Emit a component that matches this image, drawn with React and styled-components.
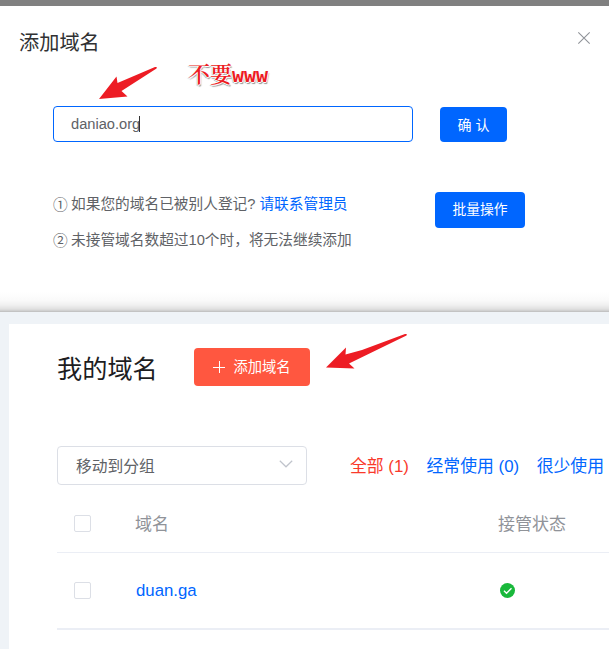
import React from "react";
import styled, { createGlobalStyle } from "styled-components";

const Global = createGlobalStyle`
  *, *::before, *::after { box-sizing: border-box; }
  html, body { margin: 0; padding: 0; overflow: hidden; }
  body { background: #fff; font-family: "Liberation Sans", "Noto Sans CJK SC", sans-serif; font-weight: 400; }
`;

const Screen = styled.main`
  position: relative;
  width: 609px;
  height: 649px;
  overflow: hidden;
  background: #fff;
`;

const Dialog = styled.section`
  height: 312px;
  border-top: 6px solid #808080;
  border-bottom: 1px solid #c3c3c3;
  background: linear-gradient(#fff 0, #fff 286px, #fafafa 294px, #f0f0f0 299px, #e0e0e0 303px, #cccccc 305px);
`;

const DialogHeader = styled.header`
  display: flex;
  justify-content: space-between;
  align-items: center;
  height: 71px;
  padding: 0 18px 0 19px;
`;

const DialogTitle = styled.h2`
  margin: 2px 0 0;
  font-size: 20.2px;
  line-height: 28px;
  font-weight: 400;
  color: #303133;
`;

const CloseButton = styled.button`
  display: flex;
  width: 14px;
  height: 14px;
  margin-top: -7px;
  padding: 0;
  border: 0;
  background: none;
  color: #909399;
`;

const FormRow = styled.div`
  display: flex;
  align-items: flex-start;
  gap: 27px;
  margin-top: 29px;
  padding-left: 53px;
`;

const DomainField = styled.div`
  display: flex;
  align-items: center;
  width: 360px;
  height: 36px;
  padding-left: 17px;
  border: 1px solid #0066ff;
  border-radius: 4px;
  font-size: 14.67px;
  color: #606266;
`;

const Caret = styled.span`
  width: 1px;
  height: 16px;
  margin-left: -1px;
  background: #333;
`;

const Button = styled.button`
  display: flex;
  align-items: center;
  justify-content: center;
  gap: 8px;
  width: ${(p) => p.$width}px;
  height: ${(p) => p.$height || 36}px;
  margin-top: ${(p) => p.$top || 0}px;
  padding: 0;
  border: 0;
  border-radius: 4px;
  background: ${(p) => (p.$danger ? "#ff5740" : "#0066ff")};
  color: #fff;
  font-family: inherit;
  font-size: ${(p) => p.$size || 13.8}px;
  font-weight: 400;
  line-height: 20px;
  white-space: pre;
`;

const HelpRow = styled.div`
  display: flex;
  align-items: flex-start;
  margin-top: 44px;
  padding-left: 53px;
`;

const Notes = styled.div`
  width: 382px;
  color: #606266;
  font-size: 14.7px;
  line-height: 36px;
`;

const Note = styled.p`
  display: flex;
  align-items: center;
  margin: 0;
  height: 36px;
  white-space: pre;
`;

const Marker = styled.span`
  width: 18px;
  font-family: "Noto Sans CJK SC", sans-serif;
`;

const NoteLink = styled.a`
  margin-left: 4px;
  color: #0066ff;
`;

const Page = styled.section`
  height: 337px;
  padding: 12px 0 0 9px;
  background: #eff3f7;
`;

const Panel = styled.div`
  height: 325px;
  padding: 24px 0 0 48px;
  background: #fff;
`;

const PanelHeader = styled.header`
  display: flex;
  align-items: center;
  height: 38px;
`;

const PanelTitle = styled.h1`
  width: 137px;
  margin: 3px 0 0;
  font-size: 25.2px;
  line-height: 36px;
  font-weight: 400;
  color: #1d1d1f;
`;

const Toolbar = styled.div`
  display: flex;
  align-items: center;
  height: 39px;
  margin-top: 60px;
`;

const GroupSelect = styled.div`
  display: flex;
  align-items: center;
  justify-content: space-between;
  width: 250px;
  height: 39px;
  padding: 0 13px 0 18px;
  border: 1px solid #dcdfe6;
  border-radius: 4px;
  color: #606266;
  font-size: 15.75px;
`;

const SelectArrow = styled.svg`
  margin-top: -4px;
`;

const Filters = styled.nav`
  display: flex;
  gap: 17.5px;
  margin: -2px 0 0 43px;
  white-space: nowrap;
  font-size: 16.85px;
`;

const Filter = styled.a`
  flex: none;
  color: ${(p) => (p.$active ? "#f93a2b" : "#0066ff")};
`;

const TableRow = styled.div`
  display: grid;
  grid-template-columns: 78px 363px 1fr;
  align-items: center;
  height: ${(p) => (p.$head ? 68 : 77)}px;
  padding-top: ${(p) => (p.$head ? 9 : 0)}px;
  padding-bottom: ${(p) => (p.$head ? 0 : 1)}px;
  border-bottom: ${(p) => (p.$head ? 1 : 2)}px solid #ebeef5;
  color: #909399;
  font-size: 17px;
  white-space: nowrap;
`;

const HeadCell = styled.span`
  margin-top: -2px;
`;

const Checkbox = styled.span`
  width: 17px;
  height: 17px;
  margin-left: 17px;
  border: 1px solid #dcdfe6;
  border-radius: 2px;
  background: #fff;
`;

const DomainLink = styled.a`
  padding: 1px 0 0 1px;
  font-size: 16.8px;
  color: #0066ff;
`;

const Status = styled.span`
  display: flex;
  padding-left: 2px;
`;

const Callout = styled.div`
  position: absolute;
  left: 188px;
  top: 57px;
  display: flex;
  align-items: center;
  height: 30px;
  color: #ed1c24;
  font-family: "Noto Serif CJK SC", "Noto Sans CJK SC", serif;
  font-size: 22px;
  font-weight: 600;
  text-shadow: -1px 0 #fff, 1px 0 #fff, 0 -1px #fff, 0 1px #fff, -1px 1px 1px #999, 1px 2px 1px #999;
`;

const Mono = styled.span`
  margin-top: 5px;
  font-family: "DejaVu Sans Mono", monospace;
  font-size: 20px;
  font-weight: 700;
`;

const ArrowLayer = styled.svg`
  position: absolute;
  left: ${(p) => p.$left}px;
  top: ${(p) => p.$top}px;
  fill: #ed1c24;
`;

export default function App() {
  return (
    <Screen>
      <Global />
      <Dialog>
        <DialogHeader>
          <DialogTitle>添加域名</DialogTitle>
          <CloseButton aria-label="关闭">
            <svg width="14" height="14" viewBox="0 0 14 14" fill="none" stroke="currentColor" strokeWidth="1.1">
              <path d="M1.3 1.3 12.7 12.7M12.7 1.3 1.3 12.7" />
            </svg>
          </CloseButton>
        </DialogHeader>
        <FormRow>
          <DomainField>daniao.org<Caret /></DomainField>
          <Button $width={67} $height={35} $top={1} $size={14}>确 认</Button>
        </FormRow>
        <HelpRow>
          <Notes>
            <Note><Marker>①</Marker>如果您的域名已被别人登记?<NoteLink>请联系管理员</NoteLink></Note>
            <Note><Marker>②</Marker>未接管域名数超过10个时，将无法继续添加</Note>
          </Notes>
          <Button $width={90} $top={6}>批量操作</Button>
        </HelpRow>
      </Dialog>

      <Page>
        <Panel>
          <PanelHeader>
            <PanelTitle>我的域名</PanelTitle>
            <Button $danger $width={116} $height={38} $size={14.3}>
              <svg width="12" height="12" viewBox="0 0 12 12" stroke="#fff" strokeWidth="1">
                <path d="M0 6.5h12M6.5 0v12" />
              </svg>
              添加域名
            </Button>
          </PanelHeader>
          <Toolbar>
            <GroupSelect>
              移动到分组
              <SelectArrow width="14" height="8" viewBox="0 0 14 8" fill="none" stroke="#c0c4cc" strokeWidth="1.2">
                <path d="m.8.8 6.2 6 6.2-6" />
              </SelectArrow>
            </GroupSelect>
            <Filters>
              <Filter $active>全部 (1)</Filter>
              <Filter>经常使用 (0)</Filter>
              <Filter>很少使用</Filter>
            </Filters>
          </Toolbar>
          <TableRow $head>
            <Checkbox />
            <HeadCell>域名</HeadCell>
            <HeadCell>接管状态</HeadCell>
          </TableRow>
          <TableRow>
            <Checkbox />
            <DomainLink>duan.ga</DomainLink>
            <Status>
              <svg width="15" height="15" viewBox="0 0 15 15" fill="none">
                <circle cx="7.5" cy="7.5" r="7.5" fill="#19b83b" />
                <path d="m4 7.8 2.5 2.4 5-5" stroke="#fff" strokeWidth="1.4" />
              </svg>
            </Status>
          </TableRow>
        </Panel>
      </Page>

      <Callout>不要<Mono>www</Mono></Callout>
      <ArrowLayer $left={99} $top={66} width="59" height="34" viewBox="0 0 59 34">
        <path d="M0 33 17.5 10.5 18.5 17 56 1Q59 .5 57.5 2.5L22.5 25 28.5 30.5Z" />
      </ArrowLayer>
      <ArrowLayer $left={326} $top={333} width="82" height="37" viewBox="0 0 82 37">
        <path d="M0 34.5 20 14.5 19.5 21.5 36 17 79 1Q82 .5 80.5 2.5L23 30.5 28.5 35.5Z" />
      </ArrowLayer>
    </Screen>
  );
}
